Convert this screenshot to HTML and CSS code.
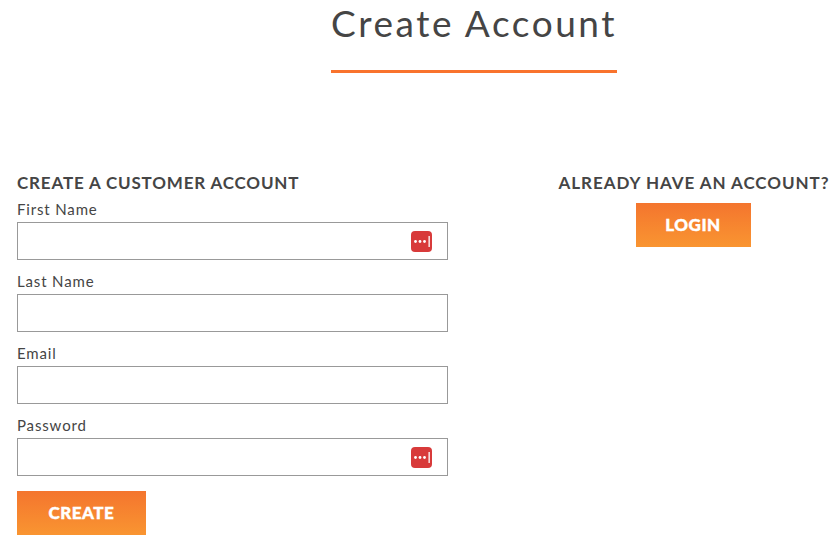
FILE: index.html
```html
<!DOCTYPE html>
<html lang="en">
<head>
  <meta charset="UTF-8" />
  <title>Create Account</title>
  <link rel="stylesheet" href="styles.css">
</head>
<body>
  <div class="page-title">
    <h1>Create Account</h1>
  </div>

  <div class="account-row">
    <form class="create-form">
      <h2>CREATE A CUSTOMER ACCOUNT</h2>

      <label>First Name</label>
      <div class="field">
        <input type="text" />
        <svg class="pass-icon" viewBox="0 0 21 21"><rect width="21" height="21" rx="4" fill="#d83a3a"/><circle cx="4.5" cy="10.5" r="1.4" fill="#fff"/><circle cx="9" cy="10.5" r="1.4" fill="#fff"/><circle cx="13.5" cy="10.5" r="1.4" fill="#fff"/><rect x="17.5" y="5" width="1.3" height="11" fill="#fff"/></svg>
      </div>

      <label>Last Name</label>
      <div class="field">
        <input type="text" />
      </div>

      <label>Email</label>
      <div class="field">
        <input type="text" />
      </div>

      <label>Password</label>
      <div class="field">
        <input type="password" />
        <svg class="pass-icon" viewBox="0 0 21 21"><rect width="21" height="21" rx="4" fill="#d83a3a"/><circle cx="4.5" cy="10.5" r="1.4" fill="#fff"/><circle cx="9" cy="10.5" r="1.4" fill="#fff"/><circle cx="13.5" cy="10.5" r="1.4" fill="#fff"/><rect x="17.5" y="5" width="1.3" height="11" fill="#fff"/></svg>
      </div>

      <button type="button" class="btn btn-create">CREATE</button>
    </form>

    <div class="login-side">
      <h2>ALREADY HAVE AN ACCOUNT?</h2>
      <button type="button" class="btn btn-login">LOGIN</button>
    </div>
  </div>
</body>
</html>
```

FILE: styles.css
```css
html, body {
  overflow: hidden;
}

body {
  font-family: Lato, "Open Sans", sans-serif;
  color: #454545;
  background: white;
  margin: 0;
}

.page-title {
  width: 286px;
  margin-left: 331px;
  height: 73px;
  box-sizing: border-box;
  border-bottom: 3px solid #f9732d;
}

h1 {
  margin: 0;
  font-size: 37px;
  line-height: 45px;
  font-weight: 400;
  letter-spacing: 2.55px;
  white-space: nowrap;
}

h2 {
  margin: 0;
  font-size: 17px;
  line-height: 20px;
  font-weight: 700;
  letter-spacing: 0.83px;
  white-space: nowrap;
}

.account-row {
  display: flex;
  padding: 100px 0 0 17px;
}

.create-form {
  width: 431px;
}

.create-form h2 {
  margin-bottom: 7px;
}

label {
  display: block;
  font-size: 15px;
  line-height: 18px;
  letter-spacing: 0.85px;
  font-weight: 400;
  margin-bottom: 4px;
}

.field {
  position: relative;
  margin-bottom: 12px;
}

input {
  display: block;
  width: 100%;
  height: 38px;
  box-sizing: border-box;
  border: 1px solid #999;
  background: white;
  padding: 0 10px;
}

.pass-icon {
  position: absolute;
  right: 16px;
  top: 9px;
  width: 21px;
  height: 21px;
}

.btn {
  display: block;
  height: 44px;
  padding: 0 0 2px;
  border: none;
  color: white;
  font-family: inherit;
  font-size: 17px;
  font-weight: 900;
  letter-spacing: 0.5px;
  -webkit-text-stroke: 0.4px white;
  background: linear-gradient(to bottom, #f4752e, #f99531);
}

.btn-create {
  width: 129px;
  margin-top: 15px;
}

.login-side {
  display: flex;
  flex-direction: column;
  align-items: center;
  margin-left: 110px;
  width: 270px;
}

.login-side h2 {
  letter-spacing: 0.95px;
  margin-left: 2px;
}

.btn-login {
  width: 115px;
  margin-top: 10px;
}
```
